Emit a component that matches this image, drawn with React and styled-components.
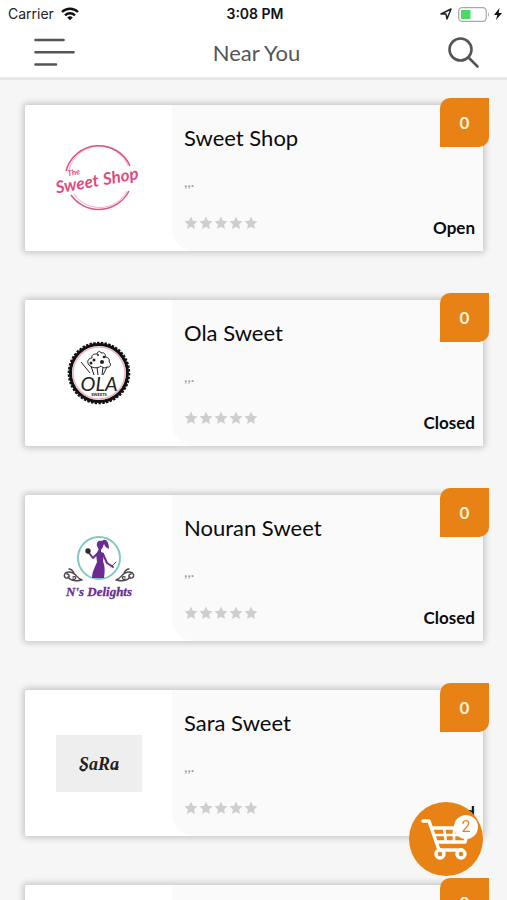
import React from "react";
import styled, { createGlobalStyle } from "styled-components";

const Global = createGlobalStyle`
  * { box-sizing: border-box; }
  html, body { margin: 0; background: #f6f6f6; }
  body { font-family: "Lato", "Noto Sans", sans-serif; color: #0b0b0b; }
  button { font: inherit; border: 0; padding: 0; background: none; cursor: pointer; }
`;

const Screen = styled.div`
  height: 100vh;
  display: flex;
  flex-direction: column;
  overflow: hidden;
`;

const Header = styled.header`
  flex: none;
  background: #fff;
  border-bottom: 3px solid #e8e8e8;
`;

const StatusBar = styled.div`
  display: grid;
  grid-template-columns: 1fr auto 1fr;
  align-items: center;
  height: 28px;
  padding: 0 5px 0 8px;
  font: 400 14px/28px "Inter", sans-serif;
  color: #222;
`;

const StatusGroup = styled.div`
  display: flex;
  align-items: center;
  justify-content: ${(p) => (p.$end ? "flex-end" : "flex-start")};
  gap: ${(p) => (p.$end ? 4 : 7)}px;
`;

const Clock = styled.time`
  font-weight: 600;
  color: #111;
`;

const NavBar = styled.nav`
  display: grid;
  grid-template-columns: 1fr auto 1fr;
  align-items: center;
  height: 49px;
  padding: 0 26px 0 32px;
`;

const NavButton = styled.button`
  display: flex;
  justify-self: ${(p) => (p.$end ? "end" : "start")};
  color: #555;
`;

const Title = styled.h1`
  margin: 0;
  font-size: 22px;
  line-height: 28px;
  font-weight: 400;
  color: #555;
`;

const List = styled.main`
  flex: 1;
  min-height: 0;
  overflow-y: auto;
  scrollbar-width: none;
  display: flex;
  flex-direction: column;
  gap: 49px;
  padding: 25px 24px 49px 25px;
`;

const Card = styled.article`
  position: relative;
  flex: none;
  display: grid;
  grid-template-columns: 147px 1fr;
  height: 146px;
  border-radius: 2px;
  background: #fff;
  box-shadow: 0 0 6px 2px rgba(0, 0, 0, 0.2);
`;

const LogoCell = styled.div`
  display: flex;
  align-items: center;
  justify-content: center;
`;

const Details = styled.div`
  display: flex;
  flex-direction: column;
  padding: 19px 8px 11px 12px;
  border-bottom-left-radius: 22px;
  background: #fafafa;
`;

const Name = styled.h2`
  margin: 0;
  font-size: 22px;
  line-height: 28px;
  font-weight: 400;
`;

const Address = styled.p`
  margin: 20px 0 0;
  font-size: 15px;
  line-height: 18px;
  color: #999;
`;

const Footer = styled.div`
  display: flex;
  justify-content: space-between;
  align-items: flex-end;
  margin-top: auto;
`;

const Stars = styled.div`
  display: flex;
  gap: 1px;
  padding-bottom: 10px;
`;

const Status = styled.span`
  font-size: 17px;
  line-height: 24px;
  font-weight: 700;
`;

const Badge = styled.span`
  position: absolute;
  top: -7px;
  right: -6px;
  width: 49px;
  height: 49px;
  border-radius: 10px 0;
  background: #e88215;
  color: #fff3dc;
  font-size: 17px;
  line-height: 50px;
  font-weight: 700;
  text-align: center;
`;

const CartButton = styled.button`
  position: fixed;
  right: 24px;
  bottom: 24px;
  width: 74px;
  height: 74px;
  border-radius: 50%;
  background: #e88215;
  color: #fff;
`;

const CartCount = styled.span`
  position: absolute;
  top: 13px;
  right: 5px;
  width: 24px;
  height: 24px;
  border-radius: 50%;
  background: #fff;
  color: #e88215;
  font-family: "Roboto", sans-serif;
  font-size: 16px;
  line-height: 24px;
`;

const CartArt = styled.svg`
  display: block;
`;

const SweetShopLogo = () => (
  <svg width="96" height="76" viewBox="-3 0 96 76" fill="none" aria-label="The Sweet Shop">
    <g stroke="#df5387" strokeWidth="1.5">
      <path d="M12 31A34 34 0 0 1 76 26M17 55A34 34 0 0 0 75 51" />
      <path d="M15 30A31 31 0 0 1 74 26M20 54A31 31 0 0 0 73 51" strokeWidth=".7" opacity=".65" />
    </g>
    <g fill="#dc4d83" fontFamily="Lato, sans-serif" fontStyle="italic" transform="rotate(-10 45 40)">
      <text x="1" y="46" fontSize="17" fontWeight="700">Sweet</text>
      <text x="49" y="46" fontSize="17" fontWeight="700">Shop</text>
      <text x="15" y="31" fontSize="8" fontWeight="700">The</text>
    </g>
  </svg>
);

const OlaLogo = () => (
  <svg width="64" height="64" viewBox="0 0 64 64" fill="none" aria-label="Ola Sweets">
    <circle cx="32" cy="32" r="28.5" fill="#fff" stroke="#111" strokeWidth="3" />
    <circle cx="32" cy="32" r="30.3" stroke="#111" strokeWidth="2" strokeDasharray="2.4 1.4" />
    <circle cx="32" cy="32" r="26" stroke="#eeb4c2" strokeWidth="1.5" />
    <g stroke="#222" strokeWidth="1" strokeLinejoin="round">
      <path d="M22 24c-3-4 0-7 3-7-1-4 3-4 5-4 0-3 4-3 4-1 4-1 5 2 4 4 3 0 5 2 4 5 3 2 1 6-2 5-3 2-5 0-6-1-4 3-9 2-12-1z" />
      <path d="m24 25 3 9m3-8 1 8m5-8-1 8m5-8-4 8M14 21l9 11" />
    </g>
    <g fill="#222"><circle cx="27" cy="19" r="1.500" /><circle cx="35" cy="21" r="2" /><circle cx="24" cy="22" r="1.500" /><circle cx="37" cy="16" r="1.300" /><circle cx="31" cy="14" r="1" /></g>
    <g fill="#222" fontFamily="Lato, sans-serif">
      <text x="32" y="50" fontSize="20" fontStyle="italic" fontWeight="400" textAnchor="middle">OLA</text>
      <text x="32" y="55" fontSize="4" fontWeight="900" textAnchor="middle">SWEETS</text>
    </g>
  </svg>
);

const DelightsLogo = () => (
  <svg width="76" height="70" viewBox="0 0 76 70" fill="none" aria-label="N's Delights">
    <circle cx="38" cy="25" r="21" stroke="#83c8c2" strokeWidth="2" />
    <g fill="#6b2c91">
      <path d="M36 13c-1-4 2-6 5-5 3-3 7 0 7 8-3-1-4-3-5-5l-2 5-3 1z" />
      <path d="M38 16h2v3l3 1-1 8c2 5 2 10 1 17H31c0-6 3-11 5-16l-1-8z" />
    </g>
    <g stroke="#6b2c91" strokeWidth="2" strokeLinecap="round" strokeLinejoin="round">
      <path d="m36 21-4 4-4-5M42 21l4 9 6 4" />
      <path d="m50 34 5-5" strokeWidth="1" />
    </g>
    <circle cx="27" cy="18" r="2.7" fill="#332635" />
    <g stroke="#4d454b" strokeWidth="1.4" strokeLinecap="round">
      <path d="M21 47c-5-1-6-8-13-8-5 0-6 5-3 6 4 1 4-4 1-4M20 47c-6 2-11 0-13-3m1-8c3 0 4 2 5 4M12 44c4-2 3 4 0 2" />
      <path d="M55 47c5-1 6-8 13-8 5 0 6 5 3 6-4 1-4-4-1-4M56 47c6 2 11 0 13-3m-1-8c-3 0-4 2-5 4M64 44c-4-2-3 4 0 2" />
    </g>
    <text x="38" y="63" fill="#6b2c91" stroke="#6b2c91" strokeWidth=".3" fontFamily="Liberation Serif, serif" fontStyle="italic" fontWeight="700" fontSize="13" textAnchor="middle">N's Delights</text>
  </svg>
);

const SaraLogo = () => (
  <svg width="86" height="57" viewBox="0 0 86 57" aria-label="SaRa">
    <path fill="#eee" d="M0 0h86v57H0z" />
    <path fill="none" stroke="#222" strokeWidth="1.500" strokeLinecap="round" d="M26 31c-3 2-1 6 3 4M58 33c1 2 3 1 4-1" />
    <text x="43" y="35" fill="#222" fontFamily="Liberation Serif, serif" fontStyle="italic" fontWeight="700" fontSize="18" textAnchor="middle">SaRa</text>
  </svg>
);

const Star = () => (
  <svg width="14" height="14" viewBox="0 0 24 24" fill="#cecece" aria-hidden="true">
    <path d="m12 1 3.3 7.2 7.7.9-5.7 5.3 1.5 7.8-6.8-3.8-6.8 3.8 1.5-7.8L1 9.1l7.7-.9z" />
  </svg>
);

const shops = [
  { name: "Sweet Shop", status: "Open", Logo: SweetShopLogo },
  { name: "Ola Sweet", status: "Closed", Logo: OlaLogo },
  { name: "Nouran Sweet", status: "Closed", Logo: DelightsLogo },
  { name: "Sara Sweet", status: "Closed", Logo: SaraLogo },
  { name: "", status: "", Logo: null },
];

const ShopCard = ({ name, status, Logo }) => (
  <Card>
    <LogoCell>{Logo && <Logo />}</LogoCell>
    <Details>
      {name && (
        <>
          <Name>{name}</Name>
          <Address>,,.</Address>
          <Footer>
            <Stars role="img" aria-label="No rating">
              {[1, 2, 3, 4, 5].map((n) => <Star key={n} />)}
            </Stars>
            <Status>{status}</Status>
          </Footer>
        </>
      )}
    </Details>
    <Badge>0</Badge>
  </Card>
);

export default function App() {
  return (
    <Screen>
      <Global />
      <Header>
        <StatusBar>
          <StatusGroup>
            Carrier
            <svg width="18" height="14" viewBox="0 0 18 14" fill="none" stroke="#111" strokeWidth="2.4" aria-hidden="true">
              <path d="M1 5a11.5 11.5 0 0 1 16 0M4 8.3a7.2 7.2 0 0 1 10 0" />
              <path d="M6.2 10.5a4 4 0 0 1 5.6 0L9 13.3z" fill="#111" stroke="none" />
            </svg>
          </StatusGroup>
          <Clock>3:08 PM</Clock>
          <StatusGroup $end>
            <svg width="16" height="14" viewBox="0 0 16 14" fill="none" stroke="#222" strokeWidth="1.5" strokeLinejoin="round" aria-hidden="true">
              <path d="m3 7 10-5-4 10-1-5z" />
            </svg>
            <svg width="32" height="15" viewBox="0 0 32 15" aria-hidden="true">
              <rect x=".7" y=".7" width="27.6" height="13.6" rx="3.5" fill="#fff" stroke="#aaa" strokeWidth="1.3" />
              <path d="M3 3h9.500v9H3z" fill="#4cd964" />
              <path d="M30 5q2 2.500 0 5z" fill="#aaa" />
            </svg>
            <svg width="8" height="14" viewBox="0 0 8 14" fill="#111" aria-hidden="true">
              <path d="M5.500 1 0 8h3.300L2 13l6-7H4.600z" />
            </svg>
          </StatusGroup>
        </StatusBar>
        <NavBar>
          <NavButton aria-label="Menu">
            <svg width="44" height="30" viewBox="0 0 44 30" fill="none" stroke="currentColor" strokeWidth="2.600" strokeLinecap="round">
              <path d="M3.500 2h28M3.500 14.300h38M3.500 26.500h20.500" />
            </svg>
          </NavButton>
          <Title>Near You</Title>
          <NavButton $end aria-label="Search">
            <svg width="34" height="34" viewBox="0 0 34 34" fill="none" stroke="currentColor" strokeWidth="2.600" strokeLinecap="round">
              <circle cx="13.500" cy="13.500" r="11" />
              <path d="m21.500 21.500 9 9" />
            </svg>
          </NavButton>
        </NavBar>
      </Header>
      <List>
        {shops.map((shop, i) => <ShopCard key={i} {...shop} />)}
      </List>
      <CartButton aria-label="Cart, 2 items">
        <CartArt width="74" height="74" viewBox="0 0 74 74" fill="none" stroke="#fff" strokeWidth="3.400" strokeLinecap="round" strokeLinejoin="round">
          <path d="M14 19h6l10 29h23M23 26h37l-4 14H28" />
          <path d="M26 33h30M35 26l2 14M45 26v14" strokeWidth="2.600" />
          <circle cx="31" cy="52" r="4" fill="#e88215" />
          <circle cx="52" cy="52" r="4" fill="#e88215" />
        </CartArt>
        <CartCount>2</CartCount>
      </CartButton>
    </Screen>
  );
}
